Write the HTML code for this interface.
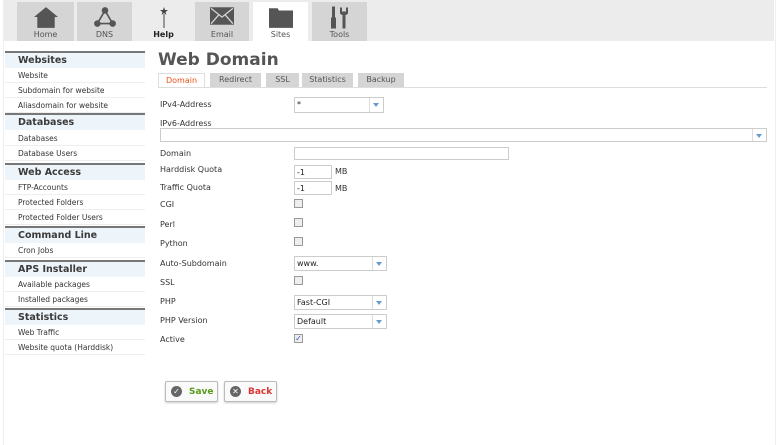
<!DOCTYPE html>
<html><head><style>
*{margin:0;padding:0;box-sizing:border-box}
body{width:779px;height:445px;background:#fff;font-family:"DejaVu Sans","Liberation Sans",sans-serif;font-size:8px;color:#444;position:relative;overflow:hidden}
.a{position:absolute}
.bar{left:4px;top:0;width:770px;height:41px;background:#ececec}
.tab{position:absolute;top:2px;height:39px;background:#d5d5d5;text-align:center;font-size:8px;color:#555}
.tab span{position:absolute;left:0;right:0;top:28px}
.tab svg{position:absolute;left:50%;top:4px;transform:translateX(-50%)}
.sh{position:absolute;left:5px;width:140px;height:17px;background:#edf4fa;border-top:2px solid #777;font-size:9.5px;font-weight:bold;color:#3a3a3a;padding:2px 0 0 13px}
.si{position:absolute;left:5px;width:140px;height:15px;border-bottom:1px solid #eee;font-size:7.5px;color:#333;padding:3px 0 0 13px}
.lb{position:absolute;left:160px;font-size:8px;color:#333}
.in{position:absolute;border:1px solid #ccc;background:#fff;font-size:8px;padding:2px 0 0 2px;color:#222}
.sel::after{content:"";position:absolute;right:4px;top:5px;border:3px solid transparent;border-top:4px solid #6a9bd0}
.sel::before{content:"";position:absolute;right:13px;top:0;bottom:0;border-left:1px solid #ddd}
.cb{position:absolute;left:294px;width:9px;height:9px;border:1px solid #999;background:#eee}
.ft{position:absolute;top:73px;height:14px;background:#d5d5d5;font-size:8px;color:#555;text-align:center;padding-top:2px}
.btn{position:absolute;top:381px;height:21px;border:1px solid #bbb;border-radius:2px;background:#fafafa;box-shadow:0 1px 2px #ccc;font-size:9px;font-weight:bold;padding:5px 0 0 23px}
.btn i{position:absolute;left:5px;top:4px;width:11px;height:11px;border-radius:50%;background:#666;color:#fff;font-style:normal;font-size:8px;line-height:11px;text-align:center}
</style></head><body>
<div class="a" style="left:3px;top:0;width:1px;height:445px;background:#eee"></div>
<div class="a" style="left:775px;top:0;width:1px;height:445px;background:#eee"></div>
<div class="a bar"></div>
<div class="tab" style="left:17px;width:57px"><svg width="24" height="22" viewBox="0 0 22 20"><path d="M11 1 L22 10 H19 V20 H3 V10 H0 Z" fill="#555"/></svg><span>Home</span></div>
<div class="tab" style="left:77px;width:55px"><svg width="24" height="22" viewBox="0 0 22 20"><path d="M11 4 L4 16 H18 Z" fill="none" stroke="#555" stroke-width="1.5"/><circle cx="11" cy="4" r="3" fill="#555"/><circle cx="4" cy="16" r="3" fill="#555"/><circle cx="18" cy="16" r="3" fill="#555"/></svg><span>DNS</span></div>
<div class="tab" style="left:136px;width:55px;background:#ececec;color:#222;font-weight:bold"><svg width="10" height="22" viewBox="0 0 10 22"><path d="M5 1 L6 4 L9 4 L6.5 6 L7.5 9 L5 7 L2.5 9 L3.5 6 L1 4 L4 4 Z" fill="#444"/><rect x="4.5" y="8" width="1" height="14" fill="#444"/></svg><span>Help</span></div>
<div class="tab" style="left:195px;width:54px"><svg width="24" height="20" viewBox="0 0 22 18"><rect x="0" y="1" width="22" height="16" fill="#555"/><path d="M1 2 L11 10 L21 2 M1 16 L8 8 M21 16 L14 8" stroke="#d5d5d5" stroke-width="1.2" fill="none"/></svg><span>Email</span></div>
<div class="tab" style="left:253px;width:55px;background:#fff"><svg width="24" height="22" viewBox="0 0 22 20"><path d="M0 2 H8 L9 4 H22 V20 H0 Z" fill="#555"/></svg><span>Sites</span></div>
<div class="tab" style="left:312px;width:55px"><svg width="22" height="23" viewBox="0 0 22 22"><rect x="3" y="0" width="3" height="22" fill="#555"/><rect x="2" y="11" width="5" height="11" fill="#555"/><path d="M11 1 V7 Q15 11 19 7 V1 L17 1 V5 H13 V1 Z M13.5 9 H16.5 V22 H13.5 Z" fill="#555"/></svg><span>Tools</span></div>

<div class="sh" style="top:51px">Websites</div>
<div class="si" style="top:68px">Website</div>
<div class="si" style="top:83px">Subdomain for website</div>
<div class="si" style="top:98px">Aliasdomain for website</div>
<div class="sh" style="top:113px">Databases</div>
<div class="si" style="top:131px">Databases</div>
<div class="si" style="top:146px">Database Users</div>
<div class="sh" style="top:163px">Web Access</div>
<div class="si" style="top:180px">FTP-Accounts</div>
<div class="si" style="top:195px">Protected Folders</div>
<div class="si" style="top:210px">Protected Folder Users</div>
<div class="sh" style="top:226px">Command Line</div>
<div class="si" style="top:243px">Cron Jobs</div>
<div class="sh" style="top:260px">APS Installer</div>
<div class="si" style="top:277px">Available packages</div>
<div class="si" style="top:292px">Installed packages</div>
<div class="sh" style="top:308px">Statistics</div>
<div class="si" style="top:325px">Web Traffic</div>
<div class="si" style="top:340px">Website quota (Harddisk)</div>

<div class="a" style="left:158px;top:50px;font-size:17px;font-weight:bold;color:#555">Web Domain</div>
<div class="ft" style="left:158px;width:47px;background:#fff;border:1px solid #ddd;border-bottom:none;color:#e8531c">Domain</div>
<div class="ft" style="left:210px;width:51px">Redirect</div>
<div class="ft" style="left:266px;width:33px">SSL</div>
<div class="ft" style="left:302px;width:51px">Statistics</div>
<div class="ft" style="left:358px;width:46px">Backup</div>
<div class="a" style="left:158px;top:87px;width:609px;height:1px;background:#ddd"></div>

<div class="lb" style="top:100px">IPv4-Address</div>
<div class="in sel" style="left:294px;top:97px;width:90px;height:16px">*</div>
<div class="lb" style="top:119px">IPv6-Address</div>
<div class="in sel" style="left:160px;top:128px;width:607px;height:14px"></div>
<div class="lb" style="top:149px">Domain</div>
<div class="in" style="left:294px;top:147px;width:215px;height:13px"></div>
<div class="lb" style="top:165px">Harddisk Quota</div>
<div class="in" style="left:294px;top:165px;width:38px;height:14px">-1</div>
<div class="lb" style="left:335px;top:167px">MB</div>
<div class="lb" style="top:183px">Traffic Quota</div>
<div class="in" style="left:294px;top:181px;width:38px;height:14px">-1</div>
<div class="lb" style="left:335px;top:184px">MB</div>
<div class="lb" style="top:200px">CGI</div><div class="cb" style="top:199px"></div>
<div class="lb" style="top:220px">Perl</div><div class="cb" style="top:218px"></div>
<div class="lb" style="top:239px">Python</div><div class="cb" style="top:237px"></div>
<div class="lb" style="top:259px">Auto-Subdomain</div>
<div class="in sel" style="left:294px;top:256px;width:93px;height:15px">www.</div>
<div class="lb" style="top:278px">SSL</div><div class="cb" style="top:276px"></div>
<div class="lb" style="top:297px">PHP</div>
<div class="in sel" style="left:294px;top:295px;width:93px;height:15px">Fast-CGI</div>
<div class="lb" style="top:316px">PHP Version</div>
<div class="in sel" style="left:294px;top:314px;width:93px;height:15px">Default</div>
<div class="lb" style="top:335px">Active</div>
<div class="cb" style="top:334px;font-size:8px;line-height:7px;color:#35c;text-align:center">✓</div>

<div class="btn" style="left:165px;width:53px;color:#5a9a1a"><i>✓</i>Save</div>
<div class="btn" style="left:224px;width:53px;color:#d33"><i>✕</i>Back</div>
</body></html>
